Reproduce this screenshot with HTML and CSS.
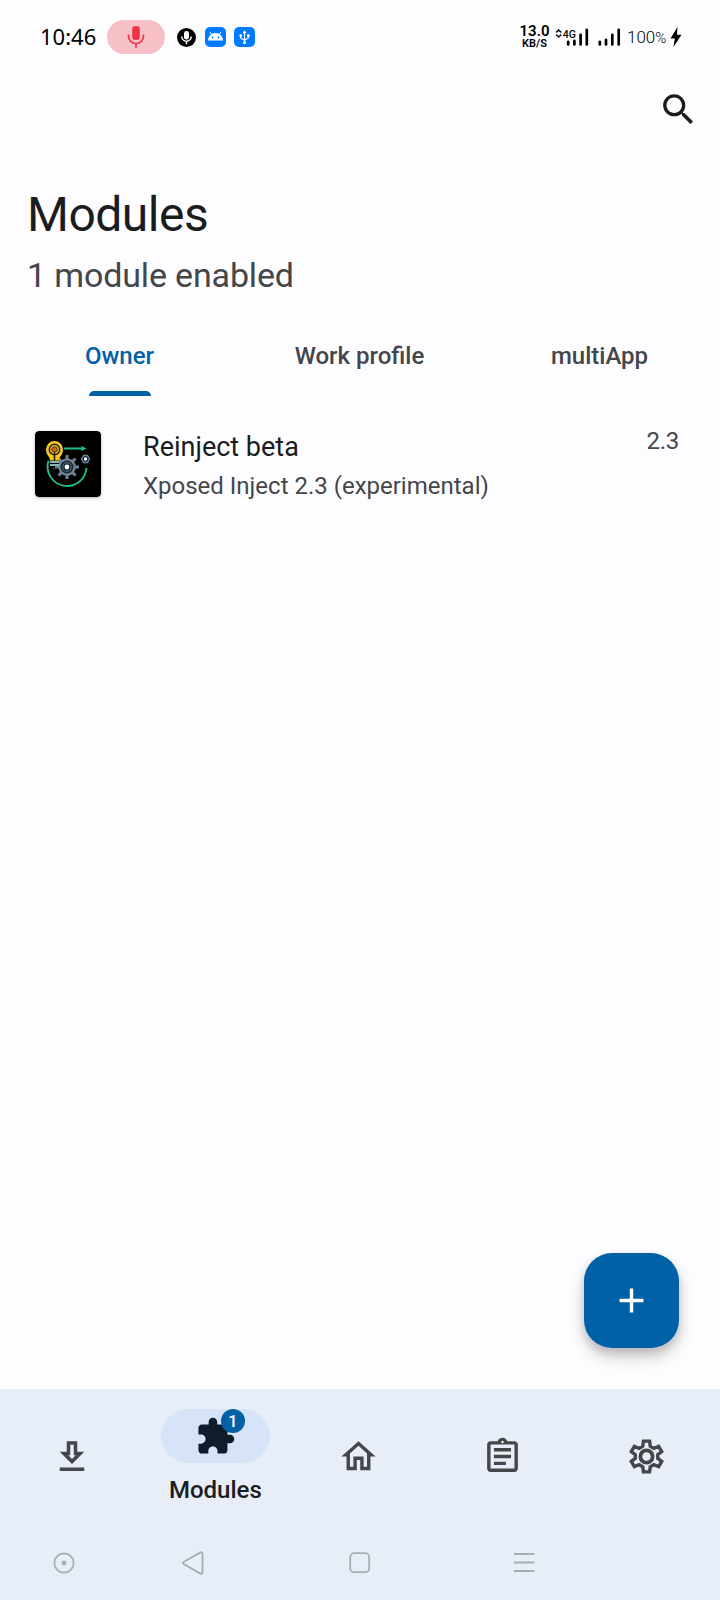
FILE: index.html
```html
<!DOCTYPE html>
<html lang="en">
<head>
<meta charset="utf-8">
<title>Modules</title>
<link rel="stylesheet" href="styles.css">
</head>
<body>
<div class="app">
  <div class="status">
    <span class="clock">10:46</span>
    <span class="mic-pill">
      <svg width="18" height="24" viewBox="0 0 18 24" fill="none" stroke="#ee3548" stroke-width="1.7"><rect x="5.200" y="1" width="7.600" height="14" rx="3" fill="#ee3548" stroke="none"/><path d="M1.500 9.500v1.500a7.500 7.500 0 0 0 15 0V9.500M9 18.500V23"/></svg>
    </span>
    <svg class="dot" width="19" height="19" viewBox="0 0 19 19"><circle cx="9.500" cy="9.500" r="9.500"/><rect x="7" y="3" width="5" height="8.500" rx="2.300" fill="#fff"/><path d="M4.800 8.500a4.700 4.700 0 0 0 9.400 0M9.500 13v3.300" fill="none" stroke="#fff" stroke-width="1.500"/></svg>
    <svg class="chip" width="21" height="20" viewBox="0 0 21 20"><rect width="21" height="20" rx="5" fill="#007aff"/><path d="M3 13.500a7.500 7.500 0 0 1 15 0z" fill="#fff"/><path d="M5 5l2 3M16 5l-2 3" stroke="#fff"/><circle cx="7.500" cy="10.500" r=".9" fill="#007aff"/><circle cx="13.500" cy="10.500" r=".9" fill="#007aff"/></svg>
    <svg class="chip" width="21" height="20" viewBox="0 0 21 20"><rect width="21" height="20" rx="5" fill="#007aff"/><path d="M10.500 4.500V16M6.700 9v2l3.800 2.300L14.300 11V9" fill="none" stroke="#fff" stroke-width="1.200"/><path d="M8.500 6.300l2-3 2 3z" fill="#fff"/><circle cx="10.500" cy="15.500" r="1.500" fill="#fff"/><circle cx="6.700" cy="8.600" r="1.300" fill="#fff"/><path d="M13 7.300h2.600v2.600H13z" fill="#fff"/></svg>
    <span class="speed"><b>13.0</b><small>KB/S</small></span>
    <svg class="signal" width="34" height="22" viewBox="0 0 34 22"><path d="M1.200 6.400L3.700 4l2.500 2.400M1.200 8.600L3.700 11l2.500-2.400" fill="none" stroke="#111" stroke-width="1.600"/><text class="net" x="7.800" y="11.600">4G</text><path d="M13.200 15.800v2.700M19.400 14.800v3.700M25.600 8.800v9.700M31.800 3.800v14.700" stroke="#000" stroke-width="2.700" stroke-linecap="round"/></svg>
    <svg class="signal2" width="23" height="22" viewBox="0 0 23 22"><path d="M1.800 15.800v2.700M8 13.800v4.700M14.300 8.800v9.700M20.700 3.800v14.700" stroke="#000" stroke-width="2.700" stroke-linecap="round"/></svg>
    <span class="battery">100<i>%</i></span>
    <svg class="bolt" width="12" height="20" viewBox="0 0 12 20"><path d="M7.500 0L.5 11.500h4.300L3.500 20 11.500 7.800H7z"/></svg>
  </div>

  <div class="toolbar">
    <svg width="41" height="41" viewBox="0 0 24 24" fill="#1b1c1e"><path d="M15.500 14h-.79l-.28-.27C15.410 12.590 16 11.110 16 9.500 16 5.910 13.090 3 9.500 3S3 5.910 3 9.500 5.910 16 9.500 16c1.610 0 3.090-.59 4.230-1.570l.27.28v.79l5 4.990L20.490 19l-4.990-5zm-6 0C7.010 14 5 11.990 5 9.500S7.010 5 9.500 5 14 7.010 14 9.500 11.990 14 9.500 14z"/></svg>
  </div>

  <header class="heading">
    <h1>Modules</h1>
    <p>1 module enabled</p>
  </header>

  <nav class="tabs">
    <span class="tab active">Owner</span>
    <span class="tab">Work profile</span>
    <span class="tab">multiApp</span>
  </nav>

  <main class="list">
    <div class="row">
      <svg class="thumb" width="66" height="66" viewBox="0 0 66 66">
        <rect width="66" height="66" rx="4"/>
        <path d="M13.500 29.500A19.500 19.500 0 1 0 51.500 37" fill="none" stroke="#1fbf8c" stroke-width="1.900"/>
        <path d="M29 17.500h19" stroke="#1fbf8c" stroke-width="1.900"/><path d="M46.500 15l5 2.500-5 2.500z" fill="#1fbf8c"/>
        <g transform="translate(32 36)"><path d="M0-12V12M-12 0H12M-8.500-8.500L8.500 8.500M8.500-8.500L-8.500 8.500" stroke="#6d8294" stroke-width="3"/><circle r="8.800" fill="#6d8294"/><circle r="6.400" fill="#17242b"/><circle r="4.300" fill="none" stroke="#53646f" stroke-width="1.200"/><circle r="2.400" fill="#fff"/></g>
        <path d="M46.500 28l2-3.500h4l2 3.500-2 3.500h-4z" fill="#15222b" stroke="#6d8294" stroke-width="1.400"/><circle cx="50.500" cy="28" r="1.700" fill="#fff"/>
        <path d="M15 29.500c0-4-4-5-4-11a8.500 8.500 0 0 1 17 0c0 6-4 7-4 11z" fill="#f7c520"/>
        <circle cx="19.500" cy="18.500" r="5.200" fill="#e9b92a" stroke="#2b2510" stroke-width="1.500"/><circle cx="19.500" cy="18.500" r="2.700" fill="#c56a10" stroke="#2b2510" stroke-width=".8"/><path d="M19.500 21.500v8" stroke="#2b2510" stroke-width="1.700"/>
        <path d="M15 31h9.500M15 34h9.500" stroke="#8eb0bd" stroke-width="2"/><path d="M18 37.500h3.500" stroke="#34434b" stroke-width="1.500"/>
      </svg>
      <div class="info">
        <div class="name">Reinject beta</div>
        <div class="desc">Xposed Inject 2.3 (experimental)</div>
      </div>
      <div class="version">2.3</div>
    </div>
  </main>

  <div class="fab-area">
    <div class="fab"><svg width="41" height="41" viewBox="0 0 24 24" fill="#fff"><path d="M19 13h-6v6h-2v-6H5v-2h6V5h2v6h6v2z"/></svg></div>
  </div>

  <nav class="bottom">
    <div class="item"><svg width="42" height="42" viewBox="0 0 24 24"><path d="M13 5v6h1.170L12 13.170 9.830 11H11V5h2m2-2H9v6H5l7 7 7-7h-4V3zm4 15H5v2h14v-2z"/></svg></div>
    <div class="item selected">
      <div class="pill">
        <svg width="41" height="41" viewBox="0 0 24 24"><path d="M20.500 11H19V7c0-1.100-.9-2-2-2h-4V3.500C13 2.120 11.880 1 10.500 1S8 2.120 8 3.500V5H4c-1.100 0-1.990.9-1.990 2v3.800H3.500c1.490 0 2.700 1.210 2.700 2.700s-1.210 2.700-2.700 2.700H2V20c0 1.100.9 2 2 2h3.800v-1.500c0-1.490 1.210-2.700 2.700-2.700 1.490 0 2.700 1.210 2.700 2.700V22H17c1.100 0 2-.9 2-2v-4h1.500c1.380 0 2.500-1.120 2.500-2.500S21.880 11 20.500 11z"/></svg>
        <span class="badge">1</span>
      </div>
      <span class="label">Modules</span>
    </div>
    <div class="item"><svg width="41" height="41" viewBox="0 0 24 24"><path d="M12 5.690l5 4.500V18h-2v-6H9v6H7v-7.810l5-4.500M12 3L2 12h3v8h6v-6h2v6h6v-8h3L12 3z"/></svg></div>
    <div class="item"><svg width="41" height="41" viewBox="0 0 24 24"><path d="M7 15h7v2H7zm0-4h10v2H7zm0-4h10v2H7zM19 3h-4.180C14.400 1.840 13.300 1 12 1s-2.400.84-2.820 2H5c-1.100 0-2 .9-2 2v14c0 1.100.9 2 2 2h14c1.100 0 2-.9 2-2V5c0-1.100-.9-2-2-2zm-7-.25c.41 0 .75.34.75.75s-.34.75-.75.75-.75-.34-.75-.75.34-.75.75-.75zM19 19H5V5h14v14z"/></svg></div>
    <div class="item"><svg width="41" height="41" viewBox="0 0 24 24"><path d="M10.200 3h3.600l.4 3 2.100 1.200 2.800-1.100 1.800 3-2.300 1.800v2.200l2.300 1.800-1.800 3-2.800-1.100-2.100 1.200-.4 3h-3.600l-.4-3-2.100-1.200-2.800 1.100-1.800-3 2.300-1.800v-2.200L3.100 9.100l1.800-3 2.800 1.100L9.800 6z" fill="none" stroke="#444649" stroke-width="2"/><circle cx="12" cy="12" r="3.600" fill="none" stroke="#444649" stroke-width="2.200"/></svg></div>
  </nav>

  <div class="sysbar">
    <svg class="s1" width="22" height="22" viewBox="0 0 22 22"><circle cx="11" cy="11" r="9.600"/><circle cx="11" cy="11" r="2.400" fill="#a8adb5" stroke="none"/></svg>
    <svg class="s2" width="22" height="24" viewBox="0 0 22 24"><path d="M2 10.700L18 1.600q2.500-1.200 2.500 1.400v18q0 2.600-2.500 1.400L2 13.300q-2-1.300 0-2.600z"/></svg>
    <svg class="s3" width="22" height="22" viewBox="0 0 22 22"><rect x="1.200" y="1.200" width="19" height="19" rx="4"/></svg>
    <svg class="s4" width="21" height="22" viewBox="0 0 21 22"><path d="M0 2h20.500M0 10.500h20.500M0 19h20.500"/></svg>
  </div>
</div>
</body>
</html>
```

FILE: styles.css
```css
* { box-sizing: border-box; }
body { margin: 0; background: #fdfdff; }
svg { display: block; flex: none; }
.app {
  width: 720px;
  height: 1600px;
  display: flex;
  flex-direction: column;
  font-family: Roboto, "Liberation Sans", sans-serif;
  color: #1b1c1e;
  overflow: hidden;
}

.status { height: 74px; display: flex; align-items: center; padding-left: 40px; flex: none; color: #000; }
.clock { width: 67px; font: 22px/30px "Noto Sans", sans-serif; white-space: nowrap; padding-bottom: 2px; }
.mic-pill { width: 58px; height: 34px; border-radius: 17px; background: #f7bfc6; display: flex; align-items: center; justify-content: center; margin-right: 12px; }
.dot { margin-right: 9px; }
.chip { margin-right: 8px; }
.speed { width: 31px; margin-left: 256px; display: flex; flex-direction: column; align-items: center; }
.speed b { font-size: 15px; line-height: 13px; font-weight: 600; }
.speed small { font-size: 11px; line-height: 11px; font-weight: 600; }
.signal { margin-left: 5px; }
.net { font: 500 10.500px Roboto, sans-serif; }
.signal2 { margin-left: 9px; }
.battery { width: 42px; margin-left: 6px; font-size: 17px; font-weight: 350; white-space: nowrap; }
.battery i { font-style: normal; font-size: 15px; }
.bolt { margin-left: 1px; }

.toolbar { height: 104px; flex: none; display: flex; justify-content: flex-end; padding: 15px 21px 0 0; }

.heading { padding: 8px 0 0 27px; flex: none; height: 136px; }
.heading h1 { margin: 0; font-size: 48px; line-height: 58px; font-weight: 400; letter-spacing: -0.5px; }
.heading p { margin: 11px 0 0; font-size: 34px; line-height: 40px; letter-spacing: -0.15px; color: #444649; }

.tabs { height: 82px; flex: none; display: grid; grid-template-columns: repeat(3, 1fr); }
.tab { position: relative; display: flex; align-items: center; justify-content: center; padding: 2px 1px 0 0; font-size: 24px; font-weight: 500; color: #444649; }
.active { color: #0061a6; }
.active::after { content: ""; position: absolute; left: 89px; bottom: 0; width: 62px; height: 5px; border-radius: 5px 5px 0 0; background: #0061a6; }

.list { flex: 1; }
.row { display: flex; padding: 34px 41px 0 35px; }
.thumb { border-radius: 4px; box-shadow: 0 1px 3px rgba(0,0,0,.3); margin-top: 1px; }
.info { flex: 1; margin-left: 42px; }
.name { font-size: 27px; line-height: 34px; }
.desc { font-size: 24px; line-height: 30px; margin-top: 7px; color: #444649; }
.version { font-size: 24px; line-height: 22px; letter-spacing: -0.3px; color: #444649; }

.fab-area { display: flex; justify-content: flex-end; padding: 0 41px 41px 0; flex: none; }
.fab { width: 95px; height: 95px; border-radius: 28px; background: #0061a6; display: flex; align-items: center; justify-content: center; box-shadow: 0 9px 16px rgba(0,0,0,.2), 0 4px 8px rgba(0,0,0,.12); }

.bottom { height: 136px; flex: none; display: grid; grid-template-columns: repeat(5, 1fr); background: #e8eef7; padding-right: 2px; }
.item { display: flex; flex-direction: column; align-items: center; padding-top: 47px; fill: #444649; }
.selected { padding-top: 20px; fill: #101c2b; }
.pill { position: relative; width: 109px; height: 54px; border-radius: 27px; background: #d7e3f6; display: flex; align-items: center; justify-content: center; }
.badge { position: absolute; left: 60px; top: 0; width: 24px; height: 24px; border-radius: 12px; background: #0061a6; color: #fff; font-size: 17px; line-height: 24px; font-weight: 500; text-align: center; }
.label { font-size: 24px; line-height: 28px; margin-top: 13px; font-weight: 500; }

.sysbar { height: 75px; flex: none; background: #e8eef7; display: flex; padding-top: 27px; fill: none; stroke: #a8adb5; stroke-width: 1.800; }
.s1 { margin-left: 53px; }
.s2 { margin: -1px 0 0 107px; }
.s3 { margin-left: 145px; }
.s4 { margin-left: 143px; }
```
